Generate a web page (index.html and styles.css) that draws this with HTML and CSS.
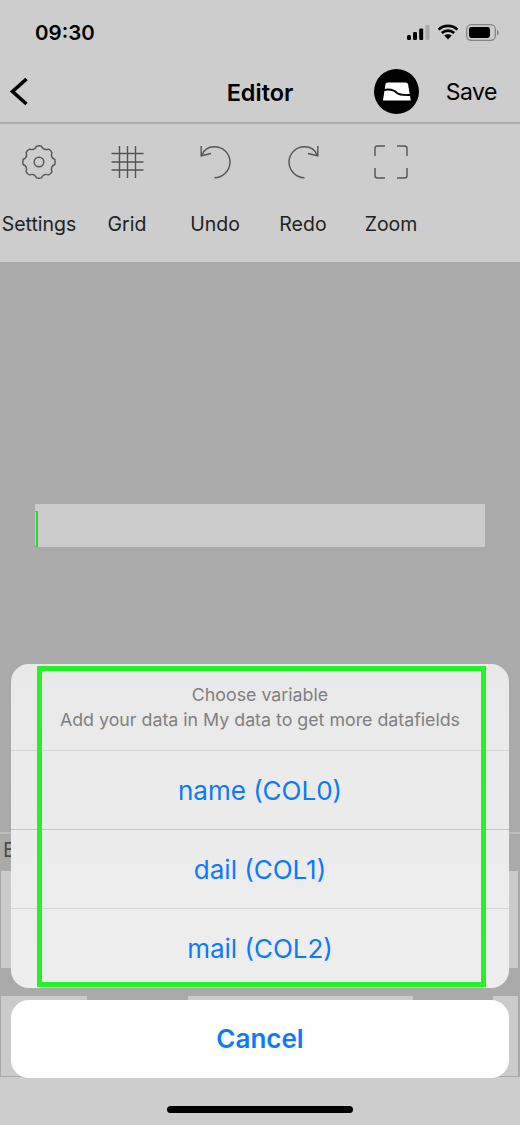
FILE: index.html
```html
<!DOCTYPE html>
<html lang="en">
<head>
<meta charset="UTF-8">
<meta name="viewport" content="width=device-width, initial-scale=1.0">
<title>Editor</title>
<link rel="stylesheet" href="styles.css">
</head>
<body>

<div class="app">
  <!-- Status bar -->
  <div class="status-bar">
    <span class="time">09:30</span>
    <div class="status-icons">
      <svg width="24" height="15" viewBox="0 0 24 15">
        <rect x="1" y="10" width="4" height="5" rx="1.5" fill="#000"/>
        <rect x="7" y="7" width="4" height="8" rx="1.2" fill="#000"/>
        <rect x="13.2" y="3.5" width="4" height="11.5" rx="1.2" fill="#000"/>
        <rect x="19.5" y="0" width="4" height="15" rx="1.2" fill="#aaa"/>
      </svg>
      <svg width="22" height="16" viewBox="0 0 22 16">
        <path d="M1.5 5.6A14 14 0 0 1 20.5 5.6M4.8 9A9.3 9.3 0 0 1 17.2 9" fill="none" stroke="#000" stroke-width="2.6"/>
        <path d="M7.3 11.6A5.4 5.4 0 0 1 14.7 11.6L11 15.6Z" fill="#000"/>
      </svg>
      <svg width="33" height="17" viewBox="0 0 33 17">
        <rect x="0.7" y="0.7" width="28.6" height="15.6" rx="4.5" fill="none" stroke="#858585" stroke-width="1.3"/>
        <rect x="3" y="3" width="21" height="11" rx="2.4" fill="#000"/>
        <path d="M31 5.8C32.2 6.2 32.8 7.2 32.8 8.5S32.2 10.8 31 11.2Z" fill="#858585"/>
      </svg>
    </div>
  </div>

  <!-- Barra de navegacion -->
  <div class="nav-bar">
    <svg class="back-icon" width="22" height="30" viewBox="0 0 22 30">
      <path d="M18.500 2L4.500 14.500L18.500 27" fill="none" stroke="#000" stroke-width="3.600"/>
    </svg>
    <h1 class="nav-title">Editor</h1>
    <div class="nav-actions">
      <svg class="nav-logo" width="45" height="45" viewBox="0 0 45 45">
        <circle cx="22.500" cy="22.500" r="22.500" fill="#000"/>
        <path d="M14 13.500H31.500C33 13.500 33.800 14.300 34.100 15.500L36.800 31.500H9L11.400 15.500C11.700 14.300 12.500 13.500 14 13.500Z" fill="#fff"/>
        <path d="M10 21C17 19.500 20 21 23 24C26 26.500 30 26 36 26" fill="none" stroke="#000" stroke-width="1.800"/>
      </svg>
      <span class="save-btn">Save</span>
    </div>
  </div>

  <!-- Herramientas -->
  <div class="toolbar">
    <div class="tool">
      <svg width="36" height="36" viewBox="0 0 36 36">
        <path class="icon-line" d="M15.500 2.200Q18 1.400 20.500 2.200Q22.600 6.900 27.400 5.100Q30 6 30.900 8.600Q29.100 13.400 33.800 15.500Q34.600 18 33.800 20.500Q29.100 22.600 30.900 27.400Q30 30 27.400 30.900Q22.600 29.100 20.500 33.800Q18 34.600 15.500 33.800Q13.400 29.100 8.600 30.900Q6 30 5.100 27.400Q6.900 22.600 2.200 20.500Q1.400 18 2.200 15.500Q6.900 13.400 5.100 8.600Q6 6 8.600 5.100Q13.400 6.900 15.500 2.200Z"/>
        <circle class="icon-line" cx="18" cy="18" r="4.800"/>
      </svg>
      <span class="tool-label">Settings</span>
    </div>
    <div class="tool">
      <svg width="36" height="36" viewBox="0 0 36 36">
        <path class="icon-line" d="M2.500 9.500H34.500M2.500 18H34.500M2.500 26H34.500M10.500 2V34M18.500 2V34M26.500 2V34"/>
      </svg>
      <span class="tool-label">Grid</span>
    </div>
    <div class="tool">
      <svg width="36" height="36" viewBox="0 0 36 36">
        <path class="icon-line" d="M4.500 11.500C7 5.500 12 2.800 17.500 2.800C26 2.800 33 9.500 33 18S26 33.500 17.500 33.800"/>
        <path class="icon-line" d="M4.200 2V11.800L14 9.500"/>
      </svg>
      <span class="tool-label">Undo</span>
    </div>
    <div class="tool">
      <svg width="36" height="36" viewBox="0 0 36 36">
        <path class="icon-line" d="M32.500 11.500C30 5.500 25 2.800 19.500 2.800C11 2.800 4 9.500 4 18S11 33.500 19.500 33.800"/>
        <path class="icon-line" d="M32.800 2V11.800L23 9.500"/>
      </svg>
      <span class="tool-label">Redo</span>
    </div>
    <div class="tool">
      <svg width="36" height="36" viewBox="0 0 36 36">
        <path class="icon-line" d="M12 2H4.500Q2 2 2 4.500V12M24 2H31.500Q34 2 34 4.500V12M2 24V31.500Q2 34 4.500 34H12M34 24V31.500Q34 34 31.500 34H24"/>
      </svg>
      <span class="tool-label">Zoom</span>
    </div>
  </div>

  <!-- Lienzo -->
  <div class="canvas">
    <div class="text-field">
      <div class="cursor"></div>
    </div>
  </div>

  <!-- Panel inferior, casi todo tapado por el action sheet -->
  <div class="bottom-panel">
    <div class="panel-label">E</div>
    <div class="panel-cell panel-cell-wide"></div>
    <div class="panel-row">
      <div class="panel-cell panel-cell-a"></div>
      <div class="panel-cell panel-cell-b"></div>
      <div class="panel-cell panel-cell-c"></div>
    </div>
  </div>

  <div class="home-area">
    <div class="home-indicator"></div>
  </div>
</div>

<!-- Action sheet -->
<div class="action-sheet">
  <div class="sheet-group">
    <div class="sheet-header">
      <div>Choose variable</div>
      <div>Add your data in My data to get more datafields</div>
    </div>
    <div class="sheet-item sheet-item-dark">name (COL0)</div>
    <div class="sheet-item">dail (COL1)</div>
    <div class="sheet-item sheet-item-last">mail (COL2)</div>
    <div class="highlight-box"></div>
  </div>
  <div class="cancel-btn">Cancel</div>
</div>

</body>
</html>
```

FILE: styles.css
```css
body {
  font-family: Inter, "Liberation Sans", sans-serif;
  background-color: #cdcdcd;
  color: #000;
  margin: 0;
  padding: 0;
}
.app {
  position: relative;
  width: 520px;
  height: 1125px;
  overflow: hidden;
  display: flex;
  flex-direction: column;
}
.status-bar {
  height: 62px;
  display: flex;
  justify-content: space-between;
  align-items: center;
  padding: 2px 21px 0 35px;
  box-sizing: border-box;
}
.time {
  font-size: 20.5px;
  font-weight: 600;
}
.status-icons {
  display: flex;
  align-items: center;
  gap: 7px;
}
.nav-bar {
  height: 60px;
  display: grid;
  grid-template-columns: 1fr auto 1fr;
  align-items: center;
  padding: 0 23px;
  border-bottom: 2px solid #acacac;
}
.back-icon {
  display: block;
  margin-left: -15px;
}
.nav-title {
  margin: 0;
  font-size: 23.5px;
  font-weight: 600;
}
.nav-actions {
  display: flex;
  justify-content: flex-end;
  align-items: center;
  gap: 27px;
}
.nav-logo {
  margin-bottom: 2px;
}
.save-btn {
  font-size: 23px;
  letter-spacing: -0.5px;
}
.toolbar {
  height: 138px;
  display: flex;
  margin-left: -5px;
}
.tool {
  width: 88px;
  display: flex;
  flex-direction: column;
  align-items: center;
  padding-top: 20px;
}
.icon-line {
  fill: none;
  stroke: #555;
  stroke-width: 1.4;
}
.tool-label {
  margin-top: 32px;
  font-size: 19.5px;
  color: #222;
  white-space: nowrap;
}
.canvas {
  height: 570px;
  background-color: #aaaaaa;
  padding: 242px 35px 0;
  box-sizing: border-box;
}
.text-field {
  height: 43px;
  background-color: #cbcbcb;
  padding-top: 7px;
  box-sizing: border-box;
}
.cursor {
  width: 1px;
  height: 34px;
  border: 1px solid #27d827;
  border-right-width: 2px;
  border-left: none;
}
.bottom-panel {
  height: 245px;
  background-color: #aaaaaa;
  border-top: 2px solid #bdbdbd;
  box-sizing: border-box;
  padding: 0 2px 1px 1px;
}
.panel-label {
  height: 37px;
  padding-left: 2px;
  font-size: 20px;
  line-height: 33px;
  color: #4d4d4d;
}
.panel-cell {
  background-color: #cbcbcb;
}
.panel-cell-wide {
  height: 97px;
}
.panel-row {
  display: flex;
  margin-top: 28px;
  height: 80px;
}
.panel-cell-a {
  width: 86px;
}
.panel-cell-b {
  width: 225px;
  margin-left: 101px;
}
.panel-cell-c {
  width: 25px;
  margin-left: auto;
}
.home-area {
  flex: 1;
  display: flex;
  justify-content: center;
  padding-top: 29px;
}
.home-indicator {
  width: 186px;
  height: 7px;
  border-radius: 4px;
  background-color: #000;
}
.action-sheet {
  position: absolute;
  top: 664px;
  left: 11px;
  width: 498px;
}
.sheet-group {
  position: relative;
  border-radius: 18px;
  overflow: hidden;
  background: linear-gradient(#e9e9e9, #eeeeee);
}
.sheet-header {
  height: 86px;
  padding-top: 18px;
  box-sizing: border-box;
  text-align: center;
  font-size: 17.8px;
  line-height: 25px;
  color: #808080;
}
.sheet-item {
  height: 79px;
  border-top: 1px solid #d6d6d6;
  box-sizing: border-box;
  display: flex;
  justify-content: center;
  align-items: center;
  font-size: 26px;
  color: #0a7aff;
}
.sheet-item-dark + .sheet-item {
  border-top-color: #c4c4c4;
}
.sheet-item-last {
  height: 80px;
}
.highlight-box {
  position: absolute;
  top: 2px;
  left: 26px;
  width: 449px;
  height: 321px;
  border: 5px solid #27f027;
  box-sizing: border-box;
}
.cancel-btn {
  margin-top: 12px;
  height: 78px;
  padding-bottom: 2px;
  box-sizing: border-box;
  border-radius: 18px;
  background-color: #fff;
  display: flex;
  justify-content: center;
  align-items: center;
  font-size: 26px;
  font-weight: 600;
  color: #0a7aff;
}
```
